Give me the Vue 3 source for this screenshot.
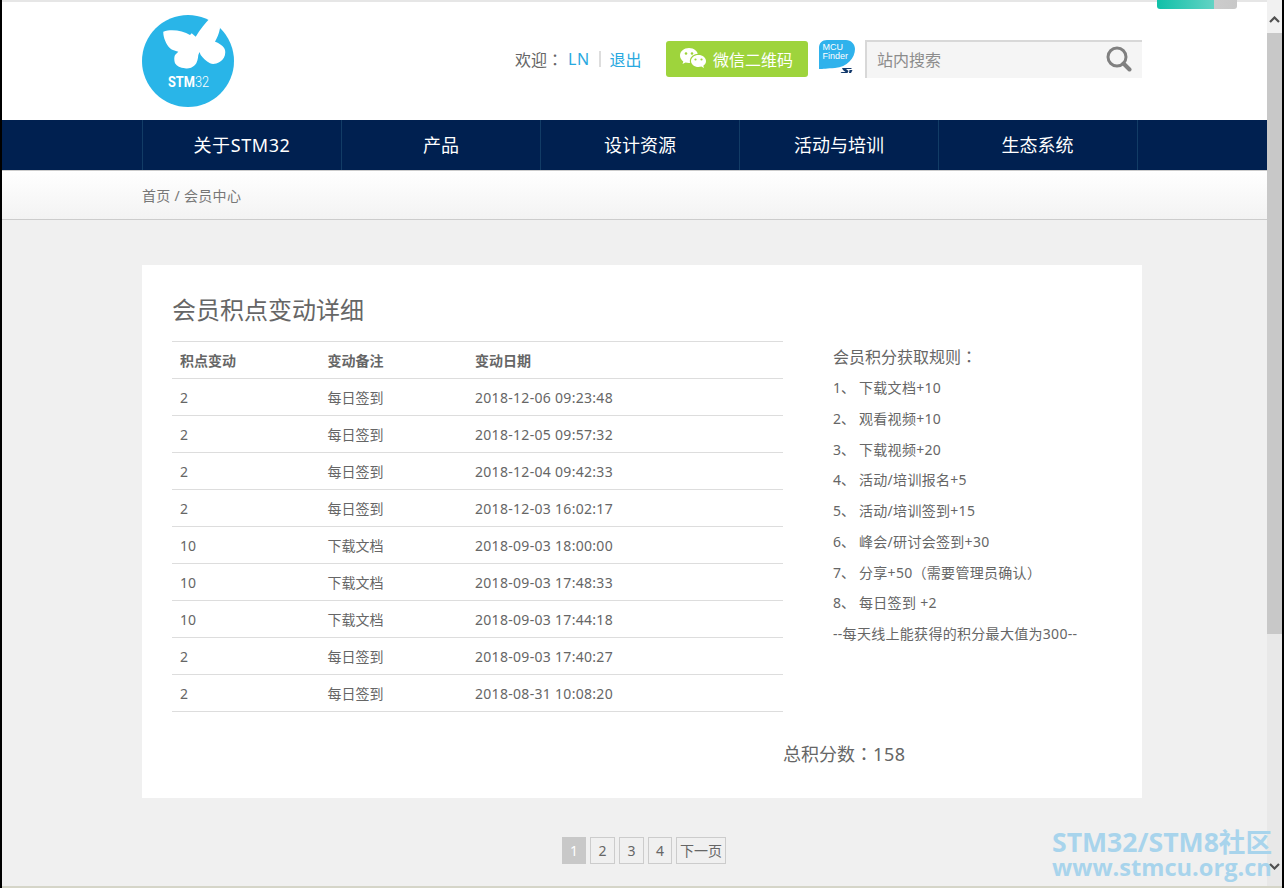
<script setup>
const navItems = ['关于STM32', '产品', '设计资源', '活动与培训', '生态系统']
const rows = [
  ['2', '每日签到', '2018-12-06 09:23:48'],
  ['2', '每日签到', '2018-12-05 09:57:32'],
  ['2', '每日签到', '2018-12-04 09:42:33'],
  ['2', '每日签到', '2018-12-03 16:02:17'],
  ['10', '下载文档', '2018-09-03 18:00:00'],
  ['10', '下载文档', '2018-09-03 17:48:33'],
  ['10', '下载文档', '2018-09-03 17:44:18'],
  ['2', '每日签到', '2018-09-03 17:40:27'],
  ['2', '每日签到', '2018-08-31 10:08:20'],
]
const rules = [
  '下载文档+10',
  '观看视频+10',
  '下载视频+20',
  '活动/培训报名+5',
  '活动/培训签到+15',
  '峰会/研讨会签到+30',
  '分享+50（需要管理员确认）',
  '每日签到 +2',
]
</script>

<template>
  <div class="screen">
    <div class="page">
      <main class="main">
        <header class="header">
          <div class="wrap header-inner">
            <svg class="logo" width="92" height="92" viewBox="0 0 92 92">
              <circle cx="46" cy="46" r="46" fill="#29b5e8" />
              <path fill="#fff" d="M21.3 16.7C30 13.5 41 16 48 20L49.7 18.3L53.7 21.7C58 15 63 8 68 3.3L76-1.7L78 13.3C77 19 75 23 73 26.7C77 28 82 31 83 35C84 40 82 44 78 46.7C74 49 71 49.5 68 48.3C64 46 61 43 58.7 40L57.5 37L56.3 40C56 44 55 48 53 50C50 53 46 54 43 53.3C38 53 35 51 33 48.3C32 45 32 42 33 40L36.3 36.7C33 36 30 35 28 33.3C24 29 21 22 21.3 16.7Z" />
              <text x="26" y="72" class="logo-text" fill="#fff" textLength="41" lengthAdjust="spacingAndGlyphs"><tspan font-weight="700">STM</tspan><tspan font-weight="300">32</tspan></text>
            </svg>
            <div class="user">
              <span>欢迎<span class="colon">：</span></span>
              <a class="link first">LN</a>
              <i class="sep"></i>
              <a class="link">退出</a>
            </div>
            <button class="wechat">
              <svg width="27" height="22" viewBox="0 0 27 22">
                <path fill="#fff" d="M9 0C4 0 0 3.300 0 7.500C0 10 1.300 12 3.300 13.400L2.500 16L5.500 14.500C6.500 14.800 7.600 15 9 15C14 15 18 11.700 18 7.500C18 3.300 14 0 9 0Z" />
                <path fill="#9ed43c" stroke="#9ed43c" stroke-width="1.500" d="M18.500 6.500C14 6.500 10.500 9.500 10.500 13C10.500 16.500 14 19.500 18.500 19.500C19.500 19.500 20.500 19.300 21.500 19L24.500 20.800L23.700 18C25.500 16.800 26.500 15 26.500 13C26.500 9.500 23 6.500 18.500 6.500Z" />
                <path fill="#fff" d="M18.500 7C14.300 7 11 9.700 11 13C11 16.300 14.300 19 18.500 19C19.500 19 20.500 18.800 21.400 18.500L24 20L23.300 17.800C25 16.700 26 15 26 13C26 9.700 22.700 7 18.500 7Z" />
                <circle cx="6" cy="5.500" r="1.300" fill="#9ed43c" />
                <circle cx="12" cy="5.500" r="1.300" fill="#9ed43c" />
                <circle cx="15.500" cy="11.500" r="1.100" fill="#9ed43c" />
                <circle cx="21.500" cy="11.500" r="1.100" fill="#9ed43c" />
              </svg>
              <span>微信二维码</span>
            </button>
            <svg class="finder" width="36" height="36" viewBox="0 0 36 36">
              <path fill="#2fb2ec" d="M0 8C0 3 3 0 8 0H27C32 0 36 4 36 9C36 18 28 27 16 28C8 28.500 4 29 0 29Z" />
              <text x="3.500" y="10" class="finder-text" fill="#fff">MCU</text>
              <text x="3.500" y="19" class="finder-text" fill="#fff">Finder</text>
              <path fill="#12396b" d="M23 28H33L32 29H27L29.500 31L28.500 33H21.500L22.500 32H26.500L24 30ZM30.500 30H33.500L32 33H30Z" />
            </svg>
            <div class="search">
              <span class="placeholder">站内搜索</span>
              <svg width="26" height="26" viewBox="0 0 26 26">
                <circle cx="11" cy="11" r="9" fill="none" stroke="#808080" stroke-width="3" />
                <path d="M17.500 17.500L23.500 23.500" stroke="#808080" stroke-width="4" stroke-linecap="round" />
              </svg>
            </div>
          </div>
        </header>

        <nav class="nav">
          <div class="wrap nav-inner">
            <a v-for="item in navItems" :key="item" class="nav-item">{{ item }}</a>
          </div>
        </nav>

        <div class="crumb">
          <div class="wrap">首页 / 会员中心</div>
        </div>

        <section class="wrap card">
          <h1 class="title">会员积点变动详细</h1>
          <div class="columns">
            <table class="table">
              <thead>
                <tr>
                  <th>积点变动</th>
                  <th>变动备注</th>
                  <th>变动日期</th>
                </tr>
              </thead>
              <tbody>
                <tr v-for="(row, i) in rows" :key="i">
                  <td>{{ row[0] }}</td>
                  <td>{{ row[1] }}</td>
                  <td class="date">{{ row[2] }}</td>
                </tr>
              </tbody>
            </table>
            <aside class="rules">
              <div class="rules-head">会员积分获取规则<span class="colon">：</span></div>
              <div v-for="(rule, i) in rules" :key="rule" class="rule">
                <span class="num">{{ i + 1 }}、</span><span>{{ rule }}</span>
              </div>
              <div class="rule">--每天线上能获得的积分最大值为300--</div>
            </aside>
          </div>
          <div class="total">总积分数<span class="colon">：</span><span class="score">158</span></div>
        </section>

        <div class="pager">
          <span class="pg active">1</span>
          <span class="pg w25">2</span>
          <span class="pg w25">3</span>
          <span class="pg">4</span>
          <span class="pg next">下一页</span>
        </div>
      </main>

      <div class="scrollbar">
        <div class="arrow-box">
          <svg width="11" height="7" viewBox="0 0 11 7"><path d="M1 6L5.500 1.500L10 6" fill="none" stroke="#505050" stroke-width="2.200" /></svg>
        </div>
        <div class="thumb"></div>
        <div class="track">
          <svg class="down" width="11" height="7" viewBox="0 0 11 7"><path d="M1 1L5.500 5.500L10 1" fill="none" stroke="#505050" stroke-width="2.200" /></svg>
        </div>
      </div>

      <div class="ribbon"></div>
      <div class="watermark">
        <div class="wm-a">STM32/STM8社区</div>
        <div class="wm-b">www.stmcu.org.cn</div>
      </div>
    </div>
  </div>
</template>

<style>
html, body {
  margin: 0;
  overflow: hidden;
  background: #000;
}
</style>

<style scoped>
.screen {
  width: 1284px;
  height: 888px;
  box-sizing: border-box;
  padding: 0 2px;
  background: #000;
  font-family: "Noto Sans", "Noto Sans CJK SC", sans-serif;
  color: #666;
  font-size: 14px;
}
.colon {
  font-family: "Noto Sans CJK TC", sans-serif;
}
.page {
  position: relative;
  display: flex;
  height: 886px;
  border-bottom: 2px solid #d5d5c8;
  overflow: hidden;
}
.main {
  width: 1265px;
  background: #f0f0f0;
  border-top: 2px solid #e6e6e6;
  box-sizing: border-box;
}
.wrap {
  width: 1000px;
  margin-left: 140px;
}
.header {
  height: 118px;
  background: #fff;
}
.header-inner {
  display: flex;
  align-items: flex-start;
}
.logo {
  margin-top: 13px;
  overflow: hidden;
}
.logo-text {
  font-family: Roboto, sans-serif;
  font-size: 14px;
}
.user {
  display: flex;
  align-items: center;
  height: 36px;
  margin-top: 39px;
  margin-left: 281px;
  width: 151px;
  font-size: 16px;
  white-space: nowrap;
}
.link {
  color: #29a9e0;
}
.first {
  margin-left: 5px;
  letter-spacing: 0.5px;
}
.sep {
  display: block;
  width: 2px;
  height: 16px;
  background: #ddd;
  margin: 0 9px;
}
.wechat {
  display: flex;
  align-items: center;
  gap: 6px;
  width: 142px;
  height: 36px;
  margin-top: 39px;
  padding: 0 0 0 14px;
  border: 0;
  border-radius: 3px;
  background: #9ed43c;
  color: #fff;
  font: inherit;
  font-size: 16px;
}
.finder {
  margin: 38px 10px 0 11px;
}
.finder-text {
  font-family: "Liberation Sans", sans-serif;
  font-size: 9px;
}
.search {
  display: flex;
  align-items: center;
  justify-content: space-between;
  flex: 1;
  height: 38px;
  margin-top: 38px;
  box-sizing: border-box;
  padding: 0 10px 2px 10px;
  background: #f5f5f5;
  border-top: 2px solid #d8d8d8;
  border-left: 2px solid #d8d8d8;
}
.placeholder {
  font-size: 16px;
  color: #8c8c8c;
}
.nav {
  height: 50px;
  background: #002050;
}
.nav-inner {
  display: flex;
  width: 996px;
  height: 50px;
}
.nav-item {
  box-sizing: border-box;
  width: 199px;
  flex: none;
  border-left: 1px solid #123c66;
  color: #fff;
  font-size: 18px;
  line-height: 50px;
  text-align: center;
}
.nav-item:first-child {
  letter-spacing: 0.6px;
}
.nav-item:last-child {
  width: 200px;
  border-right: 1px solid #123c66;
  padding-right: 1px;
}
.crumb {
  box-sizing: border-box;
  height: 50px;
  padding-top: 1px;
  line-height: 48px;
  font-size: 14px;
  letter-spacing: 0.3px;
  color: #777;
  border-top: 1px solid #ccc;
  border-bottom: 1px solid #ccc;
  background: linear-gradient(#fff, #f3f3f3);
}
.card {
  box-sizing: border-box;
  height: 533px;
  margin-top: 45px;
  padding: 0 30px;
  background: #fff;
}
.title {
  margin: 0;
  height: 76px;
  box-sizing: border-box;
  padding-top: 25px;
  line-height: 40px;
  font-size: 24px;
  font-weight: 400;
  color: #666;
}
.columns {
  display: flex;
  align-items: flex-start;
}
.table {
  width: 611px;
  flex: none;
  table-layout: fixed;
  border-collapse: collapse;
  border-top: 1px solid #ddd;
}
.table th,
.table td {
  height: 34px;
  padding: 2px 8px 0;
  box-sizing: content-box;
  border-bottom: 1px solid #ddd;
  text-align: left;
  font-size: 14px;
  line-height: 34px;
  color: #666;
}
.table th:nth-child(1),
.table th:nth-child(2) {
  width: 131.500px;
}
.table th {
  font-weight: 700;
}
.date {
  letter-spacing: 0.3px;
}
.rules {
  margin-left: 50px;
}
.rules-head {
  font-size: 16px;
  line-height: 31px;
}
.rule {
  line-height: 30.750px;
  white-space: nowrap;
  letter-spacing: 0.3px;
}
.num {
  display: inline-block;
  width: 26px;
  letter-spacing: 0;
}
.total {
  margin: 26px 0 0 611px;
  font-size: 18px;
  line-height: 30px;
  color: #666;
}
.score {
  letter-spacing: 0.6px;
}
.pager {
  display: flex;
  gap: 4px;
  margin: 39px 0 0 560px;
}
.pg {
  box-sizing: border-box;
  width: 24px;
  height: 27px;
  border: 1px solid #ccc;
  line-height: 25px;
  text-align: center;
}
.w25 {
  width: 25px;
}
.active {
  background: #c8c8c8;
  border-color: #c8c8c8;
  color: #fff;
}
.next {
  width: 50px;
}
.scrollbar {
  display: flex;
  flex-direction: column;
  width: 15px;
  background: #e8e8e8;
}
.arrow-box {
  display: flex;
  justify-content: center;
  box-sizing: border-box;
  height: 33px;
  padding-top: 16px;
  background: #f1f1f1;
}
.arrow-box svg,
.track svg {
  display: block;
}
.thumb {
  height: 601px;
  background: #c8c8c8;
}
.track {
  flex: 1;
  display: flex;
  justify-content: center;
  align-items: flex-end;
  padding-bottom: 16px;
}
.down {
  position: relative;
  z-index: 2;
}
.ribbon {
  position: absolute;
  top: 0;
  left: 1155px;
  width: 80px;
  height: 9px;
  border-radius: 0 0 3px 3px;
  background: linear-gradient(90deg, #10c0a8, #62d3c4 71%, #cccccc 71%, #c8c8c8);
}
.watermark {
  position: absolute;
  left: 1050px;
  top: 827px;
  color: #a8d4ec;
  font-family: "Open Sans", "Noto Sans CJK SC", sans-serif;
  font-weight: 700;
  white-space: nowrap;
}
.wm-a {
  font-size: 26.600px;
  line-height: 30px;
}
.wm-b {
  font-size: 23.600px;
  line-height: 20px;
}
</style>
